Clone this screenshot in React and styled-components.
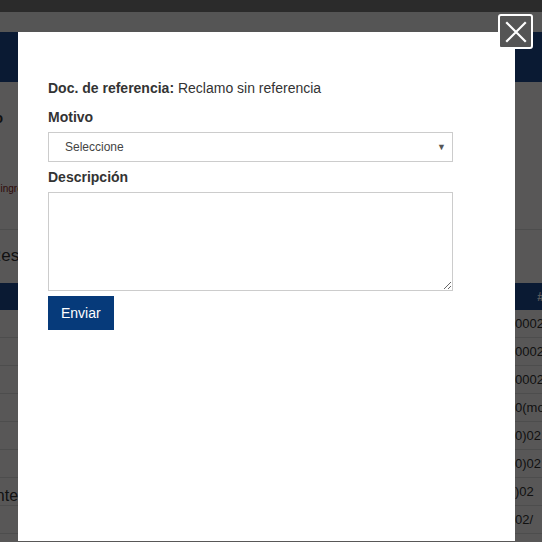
import React from "react";
import styled, { createGlobalStyle } from "styled-components";

const GlobalStyle = createGlobalStyle`
  html, body {
    margin: 0;
    padding: 0;
    height: 100%;
    overflow: hidden;
    font-family: "Liberation Sans", Arial, sans-serif;
  }
`;

const rows = ["0002/2", "0002", "0002", "0(mo", "0)02", "0)02", ")02", "02/"];

function App() {
	return (
		<>
			<GlobalStyle />
			<Page>
				<TopBar />
				<NavBar />
				<Header />
				<Content>
					<Label>Periodo</Label>
					<Hint>Fecha de ingreso</Hint>
					<Divider />
					<Summary>Resumen</Summary>
					<Table>
						<HeadRow>
							<span />
							<span>#</span>
						</HeadRow>
						{rows.map((r, i) => (
							<Row key={i}>
								<span>{i === 6 ? "Pendiente" : ""}</span>
								<span>{r}</span>
							</Row>
						))}
					</Table>
				</Content>
			</Page>
			<Overlay />
			<Modal>
				<Field>
					<strong>Doc. de referencia:</strong> Reclamo sin referencia
				</Field>
				<FieldLabel>Motivo</FieldLabel>
				<SelectBox>
					<span>Seleccione</span>
					<Arrow>▼</Arrow>
				</SelectBox>
				<FieldLabel>Descripción</FieldLabel>
				<TextArea />
				<SendButton>Enviar</SendButton>
			</Modal>
			<CloseButton aria-label="Cerrar">
				<svg width="22" height="22" viewBox="0 0 22 22">
					<path d="M2 2 L20 20 M20 2 L2 20" stroke="#fff" strokeWidth="2.2" strokeLinecap="square" />
				</svg>
			</CloseButton>
		</>
	);
}

export default App;

const Page = styled.div`
	height: 542px;
	overflow: hidden;
	background: #fbfafa;
	display: flex;
	flex-direction: column;
`;

const TopBar = styled.div`
	height: 12px;
	background: #7b7b7b;
`;

const NavBar = styled.div`
	height: 20px;
	background: #f3f3f3;
`;

const Header = styled.div`
	height: 50px;
	background: #1d4a92;
`;

const Content = styled.div`
	display: flex;
	flex-direction: column;
`;

const Label = styled.div`
	margin: 28px 0 0 -49px;
	font-size: 14px;
	font-weight: bold;
	color: #333;
`;

const Hint = styled.div`
	margin: 57px 0 0 -44px;
	font-size: 10px;
	color: #8a1c1c;
`;

const Divider = styled.div`
	margin-top: 35px;
	height: 1px;
	background: #ddd;
`;

const Summary = styled.div`
	margin: 16px 0 0 -11px;
	font-size: 17px;
	color: #333;
`;

const Table = styled.div`
	margin-top: 17px;
	display: flex;
	flex-direction: column;
`;

const HeadRow = styled.div`
	height: 27px;
	background: #1d4a92;
	color: #fff;
	font-size: 12px;
	font-weight: bold;
	display: flex;
	align-items: center;
	justify-content: space-between;
	span:last-child {
		margin-right: -2px;
	}
`;

const Row = styled.div`
	height: 27px;
	border-bottom: 1px solid #ddd;
	font-size: 13px;
	color: #333;
	display: flex;
	align-items: center;
	justify-content: space-between;
	span:first-child {
		margin: 8px 0 0 -54px;
		font-size: 16px;
	}
	span:last-child {
		width: 60px;
		margin-right: -33px;
	}
`;

const Overlay = styled.div`
	position: fixed;
	inset: 0;
	background: rgba(0, 0, 0, 0.65);
`;

const Modal = styled.div`
	position: fixed;
	top: 32px;
	left: 18px;
	width: 497px;
	height: 509px;
	box-sizing: border-box;
	background: #fff;
	padding: 46px 62px 0 30px;
	display: flex;
	flex-direction: column;
	align-items: flex-start;
	color: #333;
	font-size: 14px;
`;

const Field = styled.div`
	line-height: 20px;
	margin-bottom: 9px;
	strong {
		font-weight: bold;
	}
`;

const FieldLabel = styled.div`
	font-weight: bold;
	line-height: 20px;
	margin-bottom: 5px;
`;

const SelectBox = styled.div`
	width: 100%;
	height: 30px;
	box-sizing: border-box;
	border: 1px solid #ccc;
	display: flex;
	align-items: center;
	justify-content: space-between;
	padding: 0 6px 0 16px;
	font-size: 12px;
	color: #444;
	margin-bottom: 5px;
`;

const Arrow = styled.span`
	font-size: 9px;
	color: #555;
`;

const TextArea = styled.textarea`
	width: 100%;
	height: 99px;
	box-sizing: border-box;
	border: 1px solid #ccc;
	margin: 0 0 5px 0;
	padding: 4px;
	font-family: inherit;
	display: block;
`;

const SendButton = styled.button`
	height: 34px;
	padding: 0 13px;
	background: #063a7a;
	color: #fff;
	border: none;
	font-family: "Liberation Sans", Arial, sans-serif;
	font-size: 14px;
	cursor: pointer;
`;

const CloseButton = styled.button`
	position: fixed;
	top: 14px;
	left: 498px;
	width: 35px;
	height: 35px;
	box-sizing: border-box;
	background: #555;
	border: 2px solid #fff;
	border-radius: 3px;
	padding: 0;
	display: flex;
	align-items: center;
	justify-content: center;
	cursor: pointer;
`;
